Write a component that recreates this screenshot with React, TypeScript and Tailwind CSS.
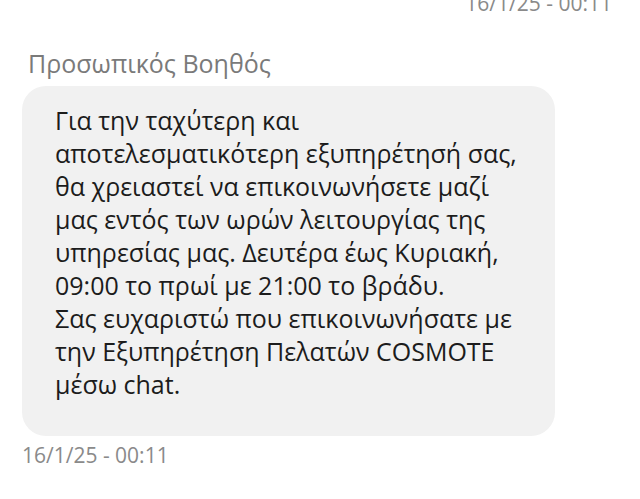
export default function App() {
  const lines = [
    "Για την ταχύτερη και",
    "αποτελεσματικότερη εξυπηρέτησή σας,",
    "θα χρειαστεί να επικοινωνήσετε μαζί",
    "μας εντός των ωρών λειτουργίας της",
    "υπηρεσίας μας. Δευτέρα έως Κυριακή,",
    "09:00 το πρωί με 21:00 το βράδυ.",
    "Σας ευχαριστώ που επικοινωνήσατε με",
    "την Εξυπηρέτηση Πελατών COSMOTE",
    "μέσω chat.",
  ];
  return (
    <div
      className="w-[640px] h-[499px] overflow-hidden bg-white flex flex-col"
      style={{ fontFamily: '"Open Sans", "Noto Sans", sans-serif' }}
    >
      <div className="flex justify-end pr-[28px] -mt-[11px] h-[28px] text-[21px] leading-[28px] text-[#8a8a8a]">
        16/1/25 - 00:11
      </div>
      <div className="pl-[28px] mt-[30px] text-[25px] leading-[32px] text-[#7a7a7a]">
        Προσωπικός Βοηθός
      </div>
      <div className="ml-[22px] mt-[7px] w-[533px] rounded-[24px] bg-[#f1f1f1] pl-[33px] pr-[20px] pt-[18px] pb-[35px] text-[25px] leading-[33px] text-[#1c1c1c]">
        {lines.map((l, i) => (
          <div key={i} className="whitespace-nowrap">{l}</div>
        ))}
      </div>
      <div className="pl-[22px] mt-[5px] text-[21px] leading-[28px] text-[#8a8a8a]">
        16/1/25 - 00:11
      </div>
    </div>
  );
}
